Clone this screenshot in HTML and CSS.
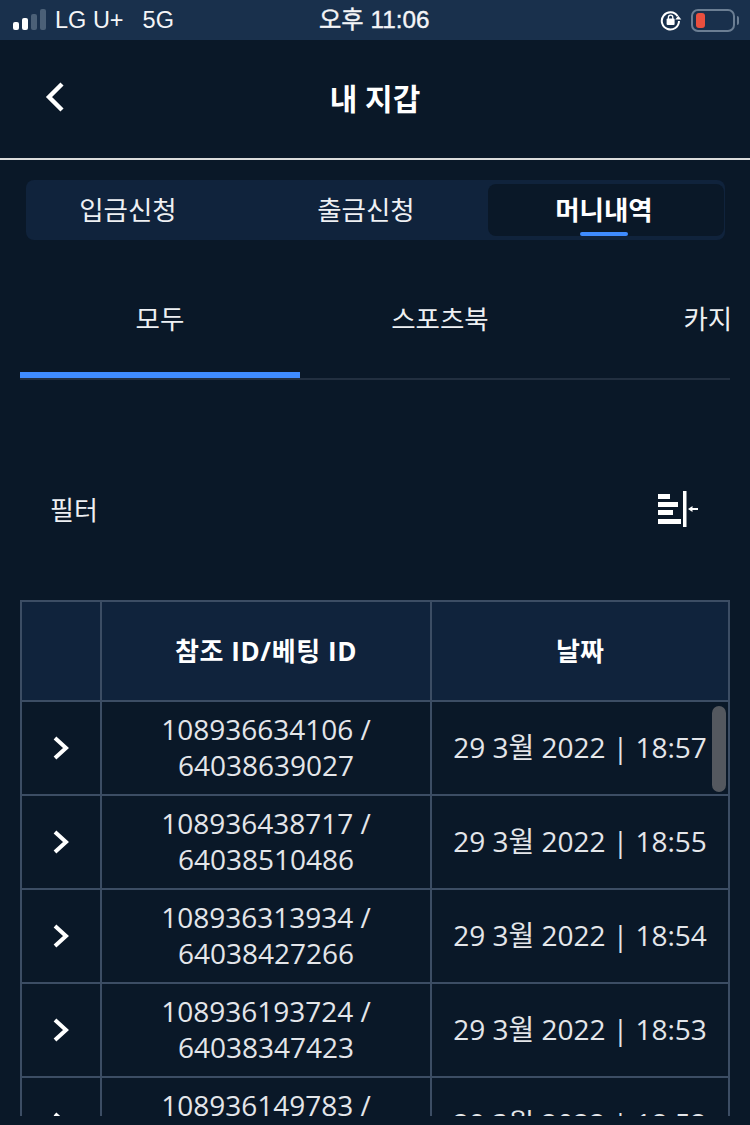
FILE: index.html
```html
<!DOCTYPE html>
<html lang="ko">
<head>
<meta charset="utf-8">
<title>내 지갑</title>
<link rel="stylesheet" href="styles.css">
</head>
<body>
<div class="status">
  <div class="status-left">
    <div class="signal"><i class="b1"></i><i class="b2"></i><i class="b3"></i><i class="b4"></i></div>
    <span class="carrier">LG U+</span><span class="net">5G</span>
  </div>
  <div class="clock">오후 11:06</div>
  <div class="status-right">
    <svg class="lock" width="22" height="22" viewBox="0 0 22 22"><path d="M17.6 7.2A8.600 8.600 0 1 0 19 12" fill="none" stroke="#fff" stroke-width="2"/><path d="M15.3 10.400h6l-3-3.600z" fill="#fff"/><rect x="6.600" y="9.600" width="8" height="6.400" rx="1" fill="#fff"/><path d="M8.400 10V8.400a2.200 2.200 0 0 1 4.400 0V10" fill="none" stroke="#fff" stroke-width="1.300"/></svg>
    <div class="battery"><div class="level"></div></div><div class="nub"></div>
  </div>
</div>
<header class="top">
  <svg class="back" width="24" height="36" viewBox="0 0 24 36"><path d="M19 5 6 18l13 13" fill="none" stroke="#fff" stroke-width="4.400"/></svg>
  <h1>내 지갑</h1>
</header>
<nav class="seg">
  <div class="seg-item first">입금신청</div>
  <div class="seg-item">출금신청</div>
  <div class="seg-item active">머니내역</div>
</nav>
<div class="tabs">
  <div class="tab on">모두</div>
  <div class="tab">스포츠북</div>
  <div class="tab">카지노</div>
</div>
<div class="filter">
  <span>필터</span>
  <svg width="40" height="36" viewBox="0 0 40 36"><path fill="#fff" d="M0 3h12v5H0zM0 11h20v5H0zM0 19h15v5H0zM0 28h23v5H0zM25 0h3.500v36H25z"/><path fill="#fff" d="M30 18l4.500-3v2H40v2h-5.500v2z"/></svg>
</div>
<div class="table-wrap">
  <table>
    <thead>
      <tr><th class="c1"></th><th class="c2">참조 ID/베팅 ID</th><th>날짜</th></tr>
    </thead>
    <tbody>
      <tr><td class="arrow"><svg class="chev" width="18" height="26" viewBox="0 0 18 26"><path d="M3 3l11 10L3 23" fill="none" stroke="#fff" stroke-width="4"/></svg></td><td>108936634106 /<br>64038639027</td><td>29 3월 2022 | 18:57</td></tr>
      <tr><td class="arrow"><svg class="chev" width="18" height="26" viewBox="0 0 18 26"><path d="M3 3l11 10L3 23" fill="none" stroke="#fff" stroke-width="4"/></svg></td><td>108936438717 /<br>64038510486</td><td>29 3월 2022 | 18:55</td></tr>
      <tr><td class="arrow"><svg class="chev" width="18" height="26" viewBox="0 0 18 26"><path d="M3 3l11 10L3 23" fill="none" stroke="#fff" stroke-width="4"/></svg></td><td>108936313934 /<br>64038427266</td><td>29 3월 2022 | 18:54</td></tr>
      <tr><td class="arrow"><svg class="chev" width="18" height="26" viewBox="0 0 18 26"><path d="M3 3l11 10L3 23" fill="none" stroke="#fff" stroke-width="4"/></svg></td><td>108936193724 /<br>64038347423</td><td>29 3월 2022 | 18:53</td></tr>
      <tr><td class="arrow"><svg class="chev" width="18" height="26" viewBox="0 0 18 26"><path d="M3 3l11 10L3 23" fill="none" stroke="#fff" stroke-width="4"/></svg></td><td>108936149783 /<br>64038318861</td><td>29 3월 2022 | 18:52</td></tr>
    </tbody>
  </table>
  <div class="scrollbar"></div>
</div>
</body>
</html>
```
FILE: styles.css
```css
* { box-sizing: border-box; }
html, body { margin: 0; height: 1125px; overflow: hidden; }
body {
  width: 750px;
  background: #0a1828;
  color: #fff;
  font-family: "Open Sans", "Noto Sans CJK KR", sans-serif;
}
.status {
  height: 40px;
  background: #19304c;
  display: flex;
  align-items: center;
  justify-content: space-between;
  position: relative;
  font-family: "Liberation Sans", "Noto Sans CJK KR", sans-serif;
  font-size: 23.5px;
  color: #f4f5f7;
}
.status-left { display: flex; align-items: center; padding-left: 13px; }
.signal { display: flex; align-items: flex-end; gap: 3px; height: 22px; margin-right: 9px; margin-top: -2px; }
.signal i { display: block; width: 6px; border-radius: 2px; background: #fff; }
.signal .b1 { height: 8px; }
.signal .b2 { height: 12px; }
.signal .b3 { height: 16px; background: #4b6077; }
.signal .b4 { height: 21px; background: #4b6077; }
.net { margin-left: 19px; }
.clock {
  position: absolute;
  left: 319px;
  top: 4px;
  line-height: 32px;
  font-weight: 400;
  font-size: 24.300px;
  -webkit-text-stroke: 0.4px #f4f5f7;
}
.status-right { display: flex; align-items: center; padding-right: 11px; }
.lock { margin-right: 9px; }
.battery {
  width: 44px;
  height: 23px;
  border: 2px solid #6b7e93;
  border-radius: 7px;
  padding: 2px 3px;
}
.level { width: 9px; height: 100%; border-radius: 3px; background: #ea4f3e; }
.nub { width: 2px; height: 9px; margin-left: 2px; background: #6b7e93; border-radius: 0 2px 2px 0; }
.top {
  height: 120px;
  border-bottom: 2px solid #dcdcdc;
  display: flex;
  align-items: center;
  justify-content: center;
  position: relative;
}
.top h1 { margin: 0; font-size: 30px; font-weight: 700; line-height: 40px; }
.back { position: absolute; left: 43px; top: 39px; }
.seg {
  margin: 20px 25px 0 26px;
  height: 60px;
  background: #10233c;
  border-radius: 8px;
  padding: 4px 2px 4px 0;
  display: grid;
  grid-template-columns: 222px 240px 236px;
  align-items: stretch;
}
.seg-item {
  font-size: 26.500px;
  line-height: 52px;
  text-align: center;
  color: #eef0f3;
  position: relative;
  height: 52px;
  padding-right: 4px;
}
.seg-item.first { padding-right: 18px; }
.seg-item.active {
  background: #0a1828;
  border-radius: 8px;
  font-weight: 700;
  color: #fff;
}
.seg-item.active::after {
  content: "";
  position: absolute;
  left: 92px;
  bottom: 0;
  width: 48px;
  height: 4px;
  border-radius: 2px;
  background: #3f8cff;
}
.tabs {
  margin: 40px 20px 0;
  height: 100px;
  display: flex;
  overflow: hidden;
  border-bottom: 2px solid #222f40;
  width: 710px;
}
.tab {
  flex: 0 0 280px;
  text-align: center;
  font-size: 26.500px;
  line-height: 78px;
  color: #eef0f3;
  height: 98px;
}
.tab.on { border-bottom: 6px solid #3f8cff; }
.filter {
  margin: 99px 52px 0 50px;
  height: 60px;
  display: flex;
  align-items: center;
  justify-content: space-between;
  font-size: 26px;
  color: #eef0f3;
}
.table-wrap {
  position: relative;
  margin: 61px 20px 0;
  width: 710px;
  height: 516px;
  overflow: hidden;
}
table {
  width: 710px;
  border-collapse: separate;
  border-spacing: 0;
  table-layout: fixed;
  border-top: 2px solid #3c4d64;
  border-left: 2px solid #3c4d64;
}
th, td {
  border-right: 2px solid #3c4d64;
  border-bottom: 2px solid #3c4d64;
  padding: 0 0 2px;
  text-align: center;
  vertical-align: middle;
}
td.arrow { padding-bottom: 0; }
th {
  height: 100px;
  background: #10233c;
  font-size: 26px;
  font-weight: 700;
}
.c1 { width: 80px; }
.c2 { width: 330px; letter-spacing: 0.6px; }
td {
  height: 94px;
  font-size: 28px;
  line-height: 36px;
  color: #e4e6ea;
}
.chev { display: block; margin: 0 auto; }
.scrollbar {
  position: absolute;
  left: 692px;
  top: 106px;
  width: 14px;
  height: 86px;
  border-radius: 7px;
  background: #54585f;
}
```
